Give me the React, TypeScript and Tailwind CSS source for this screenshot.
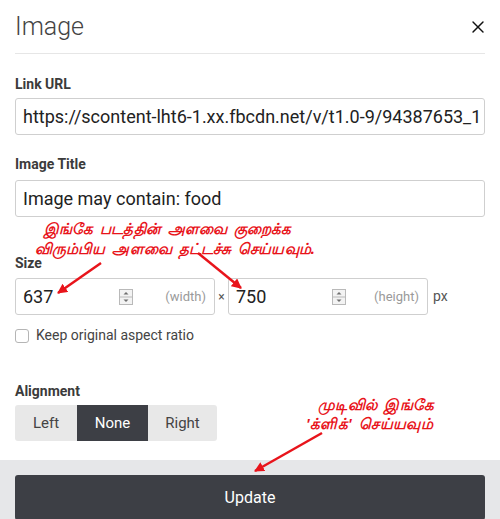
import { X } from "lucide-react";

function Spinner() {
    return (
        <svg width="14" height="16" viewBox="0 0 14 16" className="shrink-0">
            <rect x="0.5" y="0.5" width="13" height="15" fill="#f3f3f3" stroke="#b9b9b9" />
            <line x1="0.5" y1="8" x2="13.5" y2="8" stroke="#b9b9b9" />
            <path d="M4.5 5.5 L7 3 L9.5 5.5 Z" fill="#6f6f6f" />
            <path d="M4.5 10.5 L7 13 L9.5 10.5 Z" fill="#6f6f6f" />
        </svg>
    )
}

function SizeInput({ value, unit }: { value: string; unit: string }) {
    return (
        <div className="flex items-center w-[200px] h-[37px] border border-[#cfcfcf] rounded-[3px] pl-[7px] pr-[8px]">
            <span className="text-[18px] text-[#222] w-[96px]">{value}</span>
            <Spinner />
            <span className="ml-auto text-[13px] text-[#9a9a9a]">{unit}</span>
        </div>
    )
}

export default function App() {
    return (
        <div className="relative w-[500px] h-[519px] overflow-hidden bg-white font-['Roboto',sans-serif] text-[#222]">
            <div className="px-[15px]">
                <header className="flex items-center justify-between h-[54px] border-b border-[#e6e6e6]">
                    <h1 className="text-[25px] font-light text-[#444] leading-none">Image</h1>
                    <X size={20} strokeWidth={1.7} className="text-[#111] mr-[-3px]" />
                </header>

                <label className="block mt-[20px] mb-[4px] text-[14px] leading-[20px] font-bold text-[#3b3b3b]">Link URL</label>
                <div className="h-[37px] border border-[#cfcfcf] rounded-[3px] pl-[7px] flex items-center overflow-hidden whitespace-nowrap text-[18px]">
                    https://scontent-lht6-1.xx.fbcdn.net/v/t1.0-9/94387653_1
                </div>

                <label className="block mt-[19px] mb-[6px] text-[14px] leading-[20px] font-bold text-[#3b3b3b]">Image Title</label>
                <div className="h-[37px] border border-[#cfcfcf] rounded-[3px] pl-[7px] flex items-center text-[18px]">
                    Image may contain: food
                </div>

                <label className="block mt-[36px] mb-[5px] text-[14px] leading-[20px] font-bold text-[#3b3b3b]">Size</label>
                <div className="flex items-center">
                    <SizeInput value="637" unit="(width)" />
                    <span className="w-[13px] text-center text-[12px] text-[#555]">×</span>
                    <SizeInput value="750" unit="(height)" />
                    <span className="ml-[5px] text-[14px] text-[#555]">px</span>
                </div>

                <div className="flex items-center gap-[7px] mt-[10px]">
                    <span className="w-[14px] h-[14px] border border-[#b5b5b5] rounded-[3px]" />
                    <span className="text-[14px] text-[#444]">Keep original aspect ratio</span>
                </div>

                <label className="block mt-[35px] mb-[4px] text-[14px] leading-[20px] font-bold text-[#3b3b3b]">Alignment</label>
                <div className="flex w-[202px] h-[36px] rounded-[3px] overflow-hidden text-[15px]">
                    <button className="w-[62px] bg-[#e8e8e8] text-[#444]">Left</button>
                    <button className="w-[71px] bg-[#3d3f45] text-white">None</button>
                    <button className="w-[69px] bg-[#e8e8e8] text-[#444]">Right</button>
                </div>
            </div>

            <footer className="mt-[19px] bg-[#e6e7e9] px-[15px] pt-[15px] h-[80px]">
                <button className="w-full h-[45px] rounded-[3px] bg-[#3d3f45] text-white text-[16px]">Update</button>
            </footer>

            <div className="absolute left-[35px] top-[218px] text-[#e8141b] text-[15px] italic font-bold leading-[20px] tracking-[0.1px] [word-spacing:3px] font-['Noto_Sans',sans-serif]">
                <div className="pl-[9px]">இங்கே படத்தின் அளவை குறைக்க</div>
                <div>விரும்பிய அளவை தட்டச்சு செய்யவும்.</div>
            </div>
            <div className="absolute left-[306px] top-[395px] text-[#e8141b] text-[15px] italic font-bold leading-[19px] tracking-[0.3px] [word-spacing:3px] font-['Noto_Sans',sans-serif]">
                <div className="pl-[12px]">முடிவில்  இங்கே</div>
                <div>'க்ளிக்' செய்யவும்</div>
            </div>

            <svg className="absolute inset-0 pointer-events-none" width="500" height="519">
                <defs>
                    <marker id="head" viewBox="0 0 10 10" refX="9" refY="5" markerWidth="4" markerHeight="4" orient="auto">
                        <path d="M0 0 L10 5 L0 10 Z" fill="#e8141b" />
                    </marker>
                </defs>
                <line x1="101" y1="263" x2="58" y2="293" stroke="#e8141b" strokeWidth="2.5" markerEnd="url(#head)" />
                <line x1="198" y1="253" x2="241" y2="288" stroke="#e8141b" strokeWidth="2.5" markerEnd="url(#head)" />
                <line x1="322" y1="433" x2="255" y2="471" stroke="#e8141b" strokeWidth="2.5" markerEnd="url(#head)" />
            </svg>
        </div>
    )
}
